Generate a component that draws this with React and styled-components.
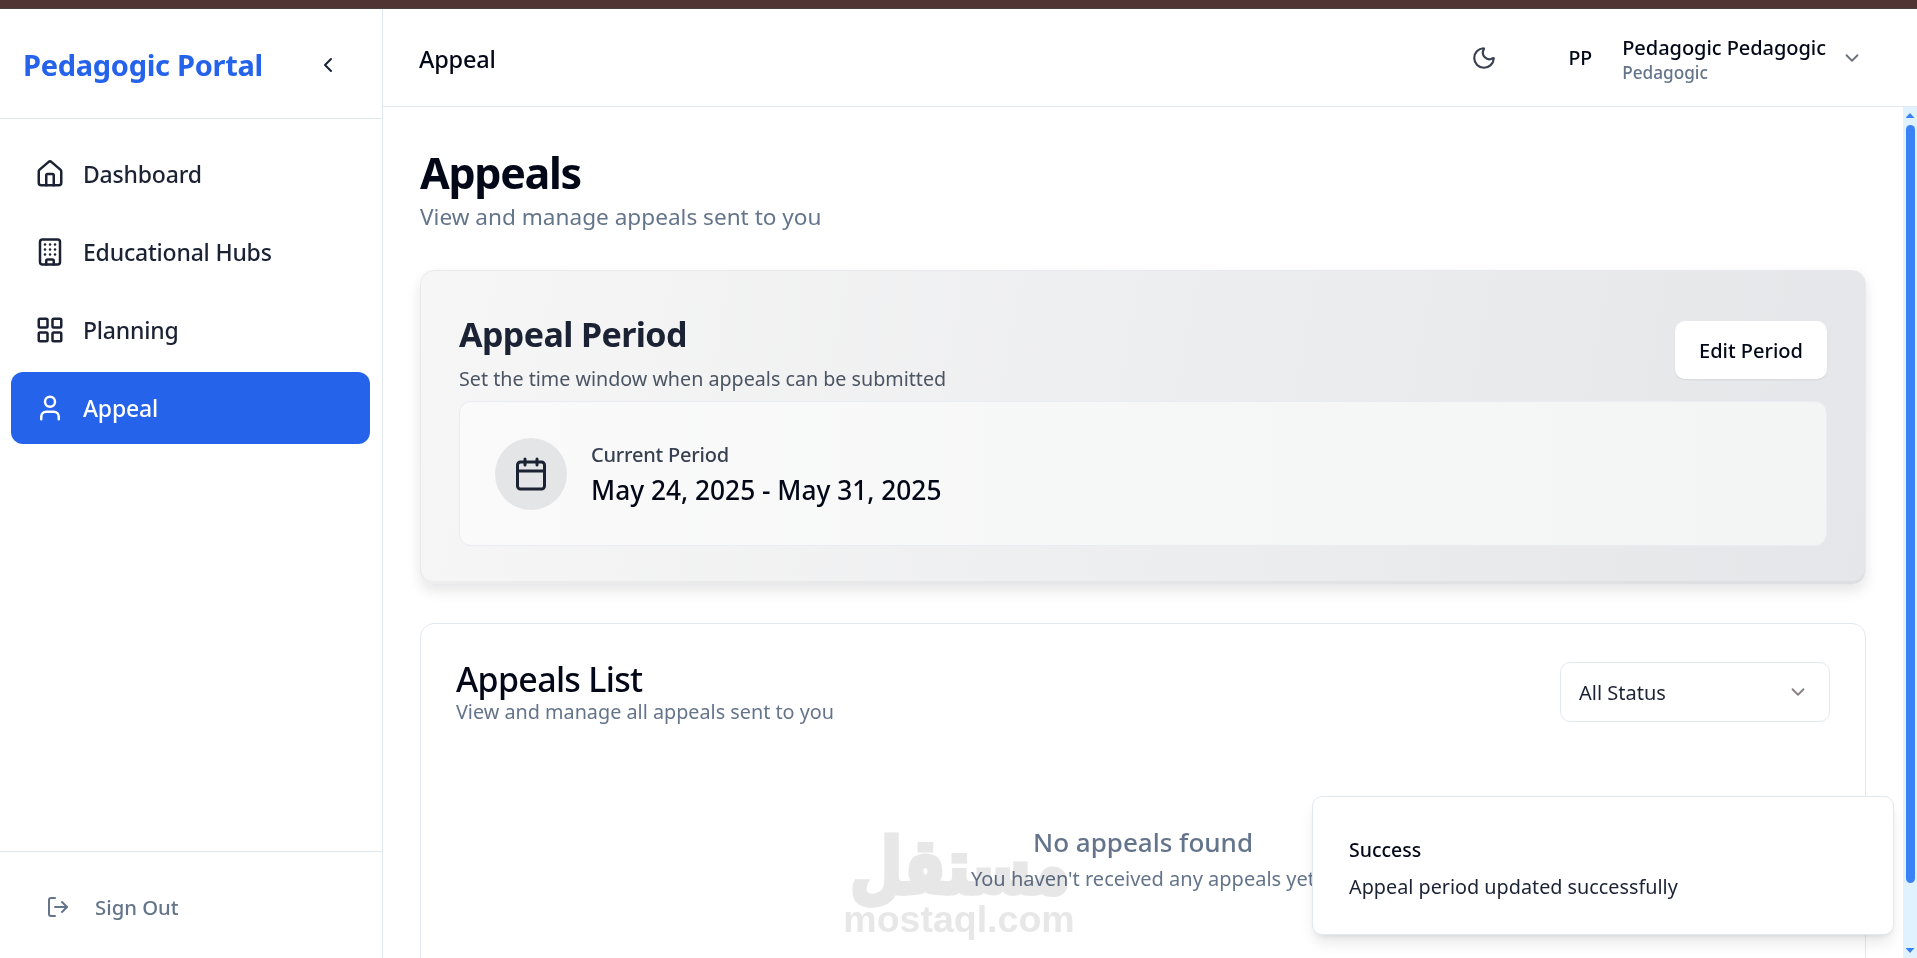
import React from 'react';
import styled, { createGlobalStyle } from 'styled-components';
import { Home, Building, LayoutGrid, User, ChevronLeft, ChevronDown, Moon, LogOut, Calendar } from 'lucide-react';

const Global = createGlobalStyle`
  html, body { margin: 0; padding: 0; height: 100%; overflow: hidden; background: #fff; }
  body { font-family: "Noto Sans", "Open Sans", Arial, sans-serif; color: #020817; }
  #root { height: 100%; }
  * { box-sizing: border-box; }
`;
const TopStrip = styled.div`height: 9px; background: #503433; border-bottom: 1px solid #4a4040;`;
const Shell = styled.div`display: flex; height: 949px; position: relative; overflow: hidden;`;
const Sidebar = styled.aside`width: 383px; flex: none; display: flex; flex-direction: column; border-right: 1px solid #e2e8f0; background: #fff;`;
const Brand = styled.div`height: 110px; flex: none; display: flex; align-items: center; justify-content: space-between; padding: 2px 42px 0 23px; border-bottom: 1px solid #e2e8f0;`;
const BrandName = styled.div`font-size: 29px; font-weight: 700; color: #2563eb; letter-spacing: -0.3px;`;
const Nav = styled.nav`flex: 1; display: flex; flex-direction: column; gap: 6px; padding: 19px 12px 0 11px;`;
const NavItem = styled.a`height: 72px; display: flex; align-items: center; gap: 18px; padding: 0 24px; border-radius: 12px; font-size: 23px; font-weight: 500; letter-spacing: -0.2px; color: ${p => p.$active ? '#fff' : '#1a2233'}; background: ${p => p.$active ? '#2563eb' : 'transparent'};`;
const Foot = styled.div`height: 107px; flex: none; border-top: 1px solid #e2e8f0; display: flex; align-items: center; gap: 25px; padding: 4px 0 0 46px; font-size: 20.3px; font-weight: 500; color: #64748b;`;
const Main = styled.div`flex: 1; min-width: 0; display: flex; flex-direction: column;`;
const Header = styled.header`height: 98px; flex: none; display: flex; align-items: center; border-bottom: 1px solid #e2e8f0; padding: 0 54px 0 36px;`;
const HeaderTitle = styled.div`flex: 1; font-size: 23.5px; font-weight: 500; letter-spacing: -0.2px; padding-top: 2px;`;
const Avatar = styled.div`font-size: 19.5px; font-weight: 500; margin: 0 30px 0 71px;`;
const UserBox = styled.div`display: flex; flex-direction: column; margin-right: 15px; padding-top: 2px;`;
const UserName = styled.div`font-size: 20px; font-weight: 500; line-height: 27px; letter-spacing: -0.05px;`;
const UserRole = styled.div`font-size: 17.2px; font-weight: 500; line-height: 23px; color: #64748b;`;
const Body = styled.div`flex: 1; min-height: 0; display: flex;`;
const Scroll = styled.main`flex: 1; min-width: 0; overflow: hidden; padding: 39px 37px 0;`;
const Rail = styled.div`width: 14px; flex: none; background: #e0f2fe; display: flex; flex-direction: column; align-items: center; padding-top: 6px;`;
const RailArrow = styled.div`width: 9px; height: 5px; flex: none; background: #3b82f6; clip-path: ${p => p.$down ? 'polygon(0 0, 100% 0, 50% 100%)' : 'polygon(50% 0, 100% 100%, 0 100%)'}; margin-top: ${p => p.$down ? '65px' : '0'};`;
const RailThumb = styled.div`width: 9px; height: 758px; flex: none; margin-top: 7px; border-radius: 5px; background: #3b82f6;`;
const PageTitle = styled.h1`margin: 0; font-size: 43px; font-weight: 700; line-height: 54px; letter-spacing: -1.3px;`;
const PageSub = styled.p`margin: 3px 0 39px; font-size: 22.6px; line-height: 28px; color: #64748b;`;
const PeriodCard = styled.section`height: 315px; border-radius: 14px; padding: 38px; background: linear-gradient(100deg, #f6f6f6, #e5e6e9); border: 1px solid #e8e9ec; box-shadow: 0 6px 14px rgba(0,0,0,.1), inset 0 -3px 0 rgba(0,0,0,.03); display: flex; flex-direction: column;`;
const PeriodTop = styled.div`display: flex; justify-content: space-between; height: 92px; flex: none;`;
const PeriodTitle = styled.h2`margin: 0; font-size: 34px; font-weight: 700; line-height: 50px; color: #1a2233; letter-spacing: -0.6px;`;
const PeriodSub = styled.p`margin: 6px 0 0; font-size: 19.7px; line-height: 28px; color: #4b5563;`;
const EditBtn = styled.button`width: 152px; height: 58px; margin-top: 12px; border: 0; border-radius: 10px; background: #fff; font: 500 20px "Noto Sans", sans-serif; color: #020817; box-shadow: 0 1px 2px rgba(0,0,0,.08);`;
const PeriodBox = styled.div`height: 145px; flex: none; border-radius: 12px; border: 1px solid #e9ecf2; background: linear-gradient(90deg, #fafafa, #f3f4f4); display: flex; align-items: center; gap: 24px; padding: 0 22px 0 35px;`;
const IconCircle = styled.div`width: 72px; height: 72px; flex: none; border-radius: 50%; background: #e4e5e7; display: flex; align-items: center; justify-content: center; color: #1a2233;`;
const PeriodText = styled.div`padding-top: 6px;`;
const PeriodLabel = styled.div`font-size: 20px; font-weight: 500; color: #374151; line-height: 26px; letter-spacing: -0.2px;`;
const PeriodDate = styled.div`font-size: 26.3px; font-weight: 500; line-height: 44px; color: #020817;`;
const ListCard = styled.section`margin-top: 38px; border: 1px solid #e2e8f0; border-radius: 14px; height: 420px; padding: 34px 35px;`;
const ListTop = styled.div`display: flex; justify-content: space-between;`;
const ListTitle = styled.h2`margin: 0; font-size: 34px; font-weight: 500; line-height: 42px; letter-spacing: -0.7px;`;
const ListSub = styled.p`margin: 0; font-size: 19.8px; line-height: 24px; color: #64748b;`;
const Select = styled.div`width: 270px; height: 60px; margin-top: 4px; border: 1px solid #e2e8f0; border-radius: 10px; display: flex; align-items: center; justify-content: space-between; padding: 0 20px 0 18px; font-size: 20px; color: #1a2233;`;
const Empty = styled.div`margin-top: 100px; text-align: center;`;
const EmptyTitle = styled.div`font-size: 26px; font-weight: 500; line-height: 36px; color: #64748b;`;
const EmptySub = styled.div`font-size: 20px; line-height: 37px; color: #64748b;`;
const Toast = styled.div`position: absolute; right: 23px; top: 787px; width: 582px; height: 139px; border-radius: 10px; background: #fff; border: 1px solid #e2e8f0; box-shadow: 0 10px 15px -3px rgba(0,0,0,.1), 0 4px 6px -4px rgba(0,0,0,.1); padding: 39px 36px; display: flex; flex-direction: column; gap: 10px;`;
const ToastTitle = styled.div`font-size: 19.5px; font-weight: 500; line-height: 27px;`;
const ToastText = styled.div`font-size: 19.8px; line-height: 27px; color: #1a2233;`;
const Watermark = styled.div`position: absolute; left: 843px; top: 809px; width: 232px; text-align: center; color: #e7e7e7; mix-blend-mode: multiply; pointer-events: none;`;
const WmArabic = styled.div`font: 700 64px/80px "DejaVu Sans", sans-serif; -webkit-text-stroke: 4px #e7e7e7; white-space: nowrap; transform: translateY(9px) scale(0.94, 1.2);`;
const WmLatin = styled.div`font: 700 37.5px/44px "Liberation Sans", sans-serif; margin-top: -1px;`;

const items = [['Dashboard', Home], ['Educational Hubs', Building], ['Planning', LayoutGrid], ['Appeal', User, true]];

export default function App() {
  return (
    <>
      <Global />
      <TopStrip />
      <Shell>
        <Sidebar>
          <Brand><BrandName>Pedagogic Portal</BrandName><ChevronLeft size={24} color="#1a2233" /></Brand>
          <Nav>
            {items.map(([label, Icon, active]) => (
              <NavItem key={label} $active={active}><Icon size={30} strokeWidth={2} />{label}</NavItem>
            ))}
          </Nav>
          <Foot><LogOut size={24} strokeWidth={2} />Sign Out</Foot>
        </Sidebar>
        <Main>
          <Header>
            <HeaderTitle>Appeal</HeaderTitle>
            <Moon size={26} color="#374151" />
            <Avatar>PP</Avatar>
            <UserBox><UserName>Pedagogic Pedagogic</UserName><UserRole>Pedagogic</UserRole></UserBox>
            <ChevronDown size={22} color="#6b7280" />
          </Header>
          <Body>
            <Scroll>
              <PageTitle>Appeals</PageTitle>
              <PageSub>View and manage appeals sent to you</PageSub>
              <PeriodCard>
                <PeriodTop>
                  <div><PeriodTitle>Appeal Period</PeriodTitle><PeriodSub>Set the time window when appeals can be submitted</PeriodSub></div>
                  <EditBtn>Edit Period</EditBtn>
                </PeriodTop>
                <PeriodBox>
                  <IconCircle><Calendar size={36} strokeWidth={2} /></IconCircle>
                  <PeriodText><PeriodLabel>Current Period</PeriodLabel><PeriodDate>May 24, 2025 - May 31, 2025</PeriodDate></PeriodText>
                </PeriodBox>
              </PeriodCard>
              <ListCard>
                <ListTop>
                  <div><ListTitle>Appeals List</ListTitle><ListSub>View and manage all appeals sent to you</ListSub></div>
                  <Select>All Status<ChevronDown size={22} color="#8a7f85" /></Select>
                </ListTop>
                <Empty><EmptyTitle>No appeals found</EmptyTitle><EmptySub>You haven't received any appeals yet</EmptySub></Empty>
              </ListCard>
            </Scroll>
            <Rail><RailArrow /><RailThumb /><RailArrow $down /></Rail>
          </Body>
        </Main>
        <Watermark><WmArabic>مستقل</WmArabic><WmLatin>mostaql.com</WmLatin></Watermark>
        <Toast><ToastTitle>Success</ToastTitle><ToastText>Appeal period updated successfully</ToastText></Toast>
      </Shell>
    </>
  );
}
